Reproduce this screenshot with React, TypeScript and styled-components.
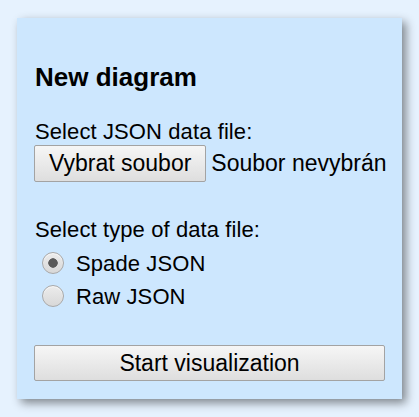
import styled, { createGlobalStyle } from 'styled-components'

const GlobalStyle = createGlobalStyle`
  html, body {
    margin: 0;
    padding: 0;
    background: #e6f2fe;
  }
  body {
    font-family: "Liberation Sans", Arial, sans-serif;
    font-size: 22px;
    color: #000;
  }
`

const Page = styled.div`
  padding: 18px 0 0 17px;
  height: 417px;
  box-sizing: border-box;
`

const Panel = styled.div`
  width: 385px;
  height: 381px;
  box-sizing: border-box;
  background: #cde7fe;
  padding: 44px 17px 18px 17px;
  box-shadow: 4px 4px 9px rgba(0, 0, 0, 0.45);
  display: flex;
  flex-direction: column;
`

const Title = styled.h3`
  margin: 0 0 27px 0;
  font-size: 26px;
  line-height: 30px;
  font-weight: bold;
  padding-left: 1px;
`

const Label = styled.div`
  line-height: 25px;
  padding-left: 1px;
  letter-spacing: 0.1px;
`

const FileRow = styled.div`
  display: flex;
  align-items: baseline;
  gap: 5px;
  margin-top: 1px;
  margin-bottom: 35px;
  white-space: nowrap;
  font-size: 23px;
`

const Button = styled.button<{ $wide?: boolean }>`
  font-family: "Liberation Sans", Arial, sans-serif;
  font-size: 23px;
  line-height: 25px;
  color: #000;
  padding: ${(p) => (p.$wide ? '5px 14px 4px' : '5px 14px')};
  width: ${(p) => (p.$wide ? '100%' : 'auto')};
  border: 1px solid #a3a3a3;
  border-radius: 2px;
  background: linear-gradient(#f6f6f6, #dedede);
  margin: 0;
`

const RadioList = styled.div`
  display: flex;
  flex-direction: column;
  margin-top: 5px;
  margin-bottom: 32px;
`

const RadioRow = styled.label`
  display: flex;
  align-items: center;
  gap: 12px;
  height: 33px;
  line-height: 33px;
  padding-left: 8px;
  letter-spacing: 0.1px;
`

const Radio = styled.span<{ $checked?: boolean }>`
  width: 20px;
  height: 20px;
  border-radius: 50%;
  border: 1px solid #a9a9a9;
  margin-top: -2px;
  background: ${(p) =>
    p.$checked
      ? 'radial-gradient(circle, #5a5a5a 0, #5a5a5a 4px, #6a6a6a 4.5px, rgba(0,0,0,0) 5px), linear-gradient(#ececec, #d8d8d8)'
      : 'linear-gradient(#ececec, #d8d8d8)'};
  box-shadow: inset 0 1px 1px rgba(255, 255, 255, 0.7);
`

export default function App() {
  return (
    <>
      <GlobalStyle />
      <Page>
        <Panel>
          <Title>New diagram</Title>
          <Label>Select JSON data file:</Label>
          <FileRow>
            <Button>Vybrat soubor</Button>
            <span>Soubor nevybrán</span>
          </FileRow>
          <Label>Select type of data file:</Label>
          <RadioList>
            <RadioRow>
              <Radio $checked />
              Spade JSON
            </RadioRow>
            <RadioRow>
              <Radio />
              Raw JSON
            </RadioRow>
          </RadioList>
          <Button $wide>Start visualization</Button>
        </Panel>
      </Page>
    </>
  )
}
